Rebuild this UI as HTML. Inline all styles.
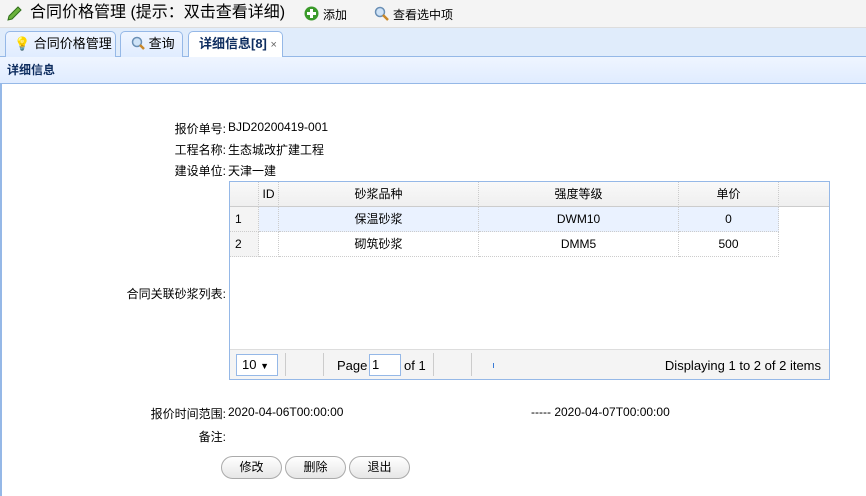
<!DOCTYPE html>
<html><head><meta charset="utf-8"><style>
*{margin:0;padding:0;box-sizing:border-box}
body{width:866px;height:496px;overflow:hidden;background:#fff;font-family:"Liberation Sans","Noto Sans CJK SC",sans-serif;font-size:12px;color:#000;position:relative}
.a{position:absolute}
.topbar{left:0;top:0;width:866px;height:28px;background:#f4f4f4;border-bottom:1px solid #ddd}
.tabs{left:0;top:28px;width:866px;height:29px;background:#e0ecfb;border-bottom:1px solid #95b8e7}
.tab{top:31px;height:26px;border:1px solid #95b8e7;border-bottom:none;border-radius:5px 5px 0 0;background:linear-gradient(#eff5ff,#e0ecff);line-height:24px;font-size:13px;padding-left:8px}
.hdr{left:0;top:57px;width:866px;height:27px;background:linear-gradient(#eff5ff,#e0ecff);border-bottom:1px solid #95b8e7;font-weight:bold;font-size:12px;line-height:26px;padding-left:7px;color:#0e2d5f}
.lbl{text-align:right;width:130px;left:96px}
.grid{left:229px;top:181px;width:601px;height:199px;border:1px solid #95b8e7}
.cell{position:absolute;text-align:center;line-height:24px;border-right:1px dotted #ccc;border-bottom:1px dotted #ccc}
.btn{top:456px;height:23px;border:1px solid #aaa;border-radius:12px;background:linear-gradient(#fff,#e6e6e6);text-align:center;line-height:21px;width:61px}
</style></head><body>
<div class="a topbar"></div>
<svg class="a" style="left:6px;top:6px" width="16" height="16"><path d="M2 14 L3 10 L12 1 L15 4 L6 13 Z" fill="#6bb33c" stroke="#2f6e1a"/></svg>
<div class="a" style="left:30px;top:3px;font-size:16px;line-height:20px">合同价格管理 (提示：双击查看详细)</div>
<svg class="a" style="left:304px;top:6px" width="15" height="15"><circle cx="7.5" cy="7.5" r="7" fill="#3a9a2a"/><rect x="6" y="3" width="3" height="9" fill="#fff"/><rect x="3" y="6" width="9" height="3" fill="#fff"/></svg>
<div class="a" style="left:323px;top:6px;font-size:12px">添加</div>
<svg class="a" style="left:374px;top:6px" width="15" height="15"><circle cx="6" cy="6" r="4.5" fill="#cfe3f7" stroke="#6a8fb5" stroke-width="1.5"/><path d="M9 9 L14 14" stroke="#c9882a" stroke-width="2.5"/></svg>
<div class="a" style="left:393px;top:6px;font-size:12px">查看选中项</div>
<div class="a tabs"></div>
<div class="a tab" style="left:5px;width:111px"><span style="color:#e6c020">💡</span> 合同价格管理</div>
<div class="a tab" style="left:120px;width:63px;padding-left:10px"><svg width="14" height="14" style="vertical-align:-2px"><circle cx="6" cy="6" r="4.5" fill="#cfe3f7" stroke="#6a8fb5" stroke-width="1.5"/><path d="M9 9 L13 13" stroke="#c9882a" stroke-width="2.5"/></svg> 查询</div>
<div class="a tab" style="left:188px;width:95px;background:#fff;height:27px;font-weight:bold;color:#0e2d5f;padding-left:10px">详细信息[8] <span style="font-weight:normal;color:#666;font-size:11px">×</span></div>
<div class="a hdr">详细信息</div>
<div class="a" style="left:0;top:84px;width:2px;height:412px;background:#95b8e7"></div>
<div class="a lbl" style="top:120px">报价单号:</div><div class="a" style="left:228px;top:120px">BJD20200419-001</div>
<div class="a lbl" style="top:141px">工程名称:</div><div class="a" style="left:228px;top:141px">生态城改扩建工程</div>
<div class="a lbl" style="top:162px">建设单位:</div><div class="a" style="left:228px;top:162px">天津一建</div>
<div class="a lbl" style="top:285px">合同关联砂浆列表:</div>
<div class="a grid">
<div class="a" style="left:0;top:0;width:599px;height:25px;background:linear-gradient(#f9f9f9,#efefef);border-bottom:1px solid #ccc"></div>
<div class="cell" style="left:0;top:0;width:29px;height:25px"></div>
<div class="cell" style="left:29px;top:0;width:20px;height:25px">ID</div>
<div class="cell" style="left:49px;top:0;width:200px;height:25px">砂浆品种</div>
<div class="cell" style="left:249px;top:0;width:200px;height:25px">强度等级</div>
<div class="cell" style="left:449px;top:0;width:100px;height:25px">单价</div>
<div class="a" style="left:29px;top:25px;width:520px;height:25px;background:#eaf2ff"></div>
<div class="cell" style="left:0;top:25px;width:29px;height:25px;background:#f4f4f4;text-align:left;padding-left:5px">1</div>
<div class="cell" style="left:29px;top:25px;width:20px;height:25px"></div>
<div class="cell" style="left:49px;top:25px;width:200px;height:25px">保温砂浆</div>
<div class="cell" style="left:249px;top:25px;width:200px;height:25px">DWM10</div>
<div class="cell" style="left:449px;top:25px;width:100px;height:25px">0</div>
<div class="cell" style="left:0;top:50px;width:29px;height:25px;background:#f4f4f4;text-align:left;padding-left:5px">2</div>
<div class="cell" style="left:29px;top:50px;width:20px;height:25px"></div>
<div class="cell" style="left:49px;top:50px;width:200px;height:25px">砌筑砂浆</div>
<div class="cell" style="left:249px;top:50px;width:200px;height:25px">DMM5</div>
<div class="cell" style="left:449px;top:50px;width:100px;height:25px">500</div>
<div class="a" style="left:0;top:167px;width:599px;height:30px;background:#f4f4f4;border-top:1px solid #ddd"></div>
<div class="a" style="left:6px;top:172px;width:42px;height:22px;border:1px solid #95b8e7;background:#fff;line-height:20px;padding-left:5px;font-size:13px">10 <span style="font-size:9px">▼</span></div>
<div class="a" style="left:55px;top:171px;width:1px;height:23px;background:#ccc"></div>
<div class="a" style="left:93px;top:171px;width:1px;height:23px;background:#ccc"></div>
<div class="a" style="left:107px;top:176px;font-size:13px">Page</div>
<div class="a" style="left:139px;top:172px;width:32px;height:22px;border:1px solid #95b8e7;background:#fff;padding-left:2px;line-height:20px;font-size:13px">1</div>
<div class="a" style="left:174px;top:176px;font-size:13px">of 1</div>
<div class="a" style="left:203px;top:171px;width:1px;height:23px;background:#ccc"></div>
<div class="a" style="left:241px;top:171px;width:1px;height:23px;background:#ccc"></div>
<div class="a" style="left:263px;top:181px;width:1px;height:5px;background:#3a7bd5"></div>
<div class="a" style="right:8px;top:176px;font-size:13px">Displaying 1 to 2 of 2 items</div>
</div>
<div class="a lbl" style="top:405px">报价时间范围:</div><div class="a" style="left:228px;top:405px">2020-04-06T00:00:00</div>
<div class="a" style="left:531px;top:405px">----- 2020-04-07T00:00:00</div>
<div class="a lbl" style="top:428px">备注:</div>
<div class="a btn" style="left:221px">修改</div>
<div class="a btn" style="left:285px">删除</div>
<div class="a btn" style="left:349px">退出</div>
</body></html>
